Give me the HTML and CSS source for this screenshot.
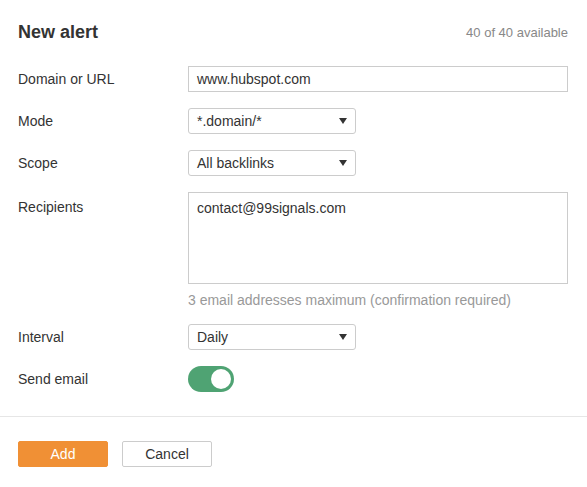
FILE: index.html
```html
<!DOCTYPE html>
<html>
<head>
<meta charset="utf-8">
<link rel="stylesheet" href="styles.css">
</head>
<body>
<div class="dialog">
  <div class="header">
    <h1 class="title">New alert</h1>
    <span class="quota">40 of 40 available</span>
  </div>
  <div class="form">
    <label class="label">Domain or URL</label>
    <div class="field"><div class="input wide">www.hubspot.com</div></div>

    <label class="label">Mode</label>
    <div class="field"><div class="select"><span>*.domain/*</span><span class="arrow"></span></div></div>

    <label class="label">Scope</label>
    <div class="field"><div class="select"><span>All backlinks</span><span class="arrow"></span></div></div>

    <label class="label label-top">Recipients</label>
    <div class="field">
      <div class="textarea">contact@99signals.com</div>
      <div class="help">3 email addresses maximum (confirmation required)</div>
    </div>

    <label class="label">Interval</label>
    <div class="field"><div class="select"><span>Daily</span><span class="arrow"></span></div></div>

    <label class="label">Send email</label>
    <div class="field"><div class="toggle"><span class="knob"></span></div></div>
  </div>
  <div class="footer">
    <button class="btn btn-primary">Add</button>
    <button class="btn btn-default">Cancel</button>
  </div>
</div>
</body>
</html>
```
FILE: styles.css
```css
* { box-sizing: border-box; }
html, body {
  margin: 0;
  padding: 0;
  background: #fff;
  font-family: "Liberation Sans", Arial, Helvetica, sans-serif;
  color: #333;
  font-size: 14px;
}
.dialog { width: 587px; }
.header {
  display: flex;
  justify-content: space-between;
  align-items: center;
  padding: 20px 19px 0 18px;
  height: 44px;
}
.title {
  margin: 0;
  font-size: 18px;
  font-weight: bold;
  line-height: 24px;
  color: #333;
}
.quota {
  font-size: 13px;
  color: #888;
}
.form {
  display: grid;
  grid-template-columns: 170px 380px;
  row-gap: 16px;
  padding: 22px 0 0 18px;
}
.label {
  display: flex;
  align-items: center;
  height: 26px;
  color: #333;
}
.label-top { padding-top: 4px; }
.field { display: flex; flex-direction: column; align-items: flex-start; }
.input {
  height: 26px;
  border: 1px solid #ccc;
  padding: 0 8px;
  display: flex;
  align-items: center;
  color: #333;
}
.wide { width: 380px; }
.select {
  width: 168px;
  height: 26px;
  border: 1px solid #ccc;
  border-radius: 3px;
  padding: 0 8px;
  display: flex;
  align-items: center;
  justify-content: space-between;
}
.arrow {
  width: 0;
  height: 0;
  border-left: 4.5px solid transparent;
  border-right: 4.5px solid transparent;
  border-top: 6px solid #333;
  margin-right: 0;
}
.textarea {
  width: 380px;
  height: 92px;
  border: 1px solid #ccc;
  padding: 7px 8px;
  line-height: 16px;
}
.help {
  margin-top: 8px;
  line-height: 16px;
  color: #999;
}
.toggle {
  width: 46px;
  height: 26px;
  border-radius: 13px;
  background: #4fa373;
  position: relative;
}
.knob {
  position: absolute;
  right: 3px;
  top: 3px;
  width: 20px;
  height: 20px;
  border-radius: 50%;
  background: #fff;
}
.footer {
  margin-top: 24px;
  border-top: 1px solid #e6e6e6;
  padding: 24px 18px 0;
  display: flex;
  gap: 14px;
}
.btn {
  width: 90px;
  height: 26px;
  font-family: inherit;
  font-size: 14px;
  border-radius: 2px;
  cursor: pointer;
}
.btn-primary {
  background: #f09035;
  border: 1px solid #f09035;
  color: #fff;
}
.btn-default {
  background: #fff;
  border: 1px solid #ccc;
  color: #333;
}
```
